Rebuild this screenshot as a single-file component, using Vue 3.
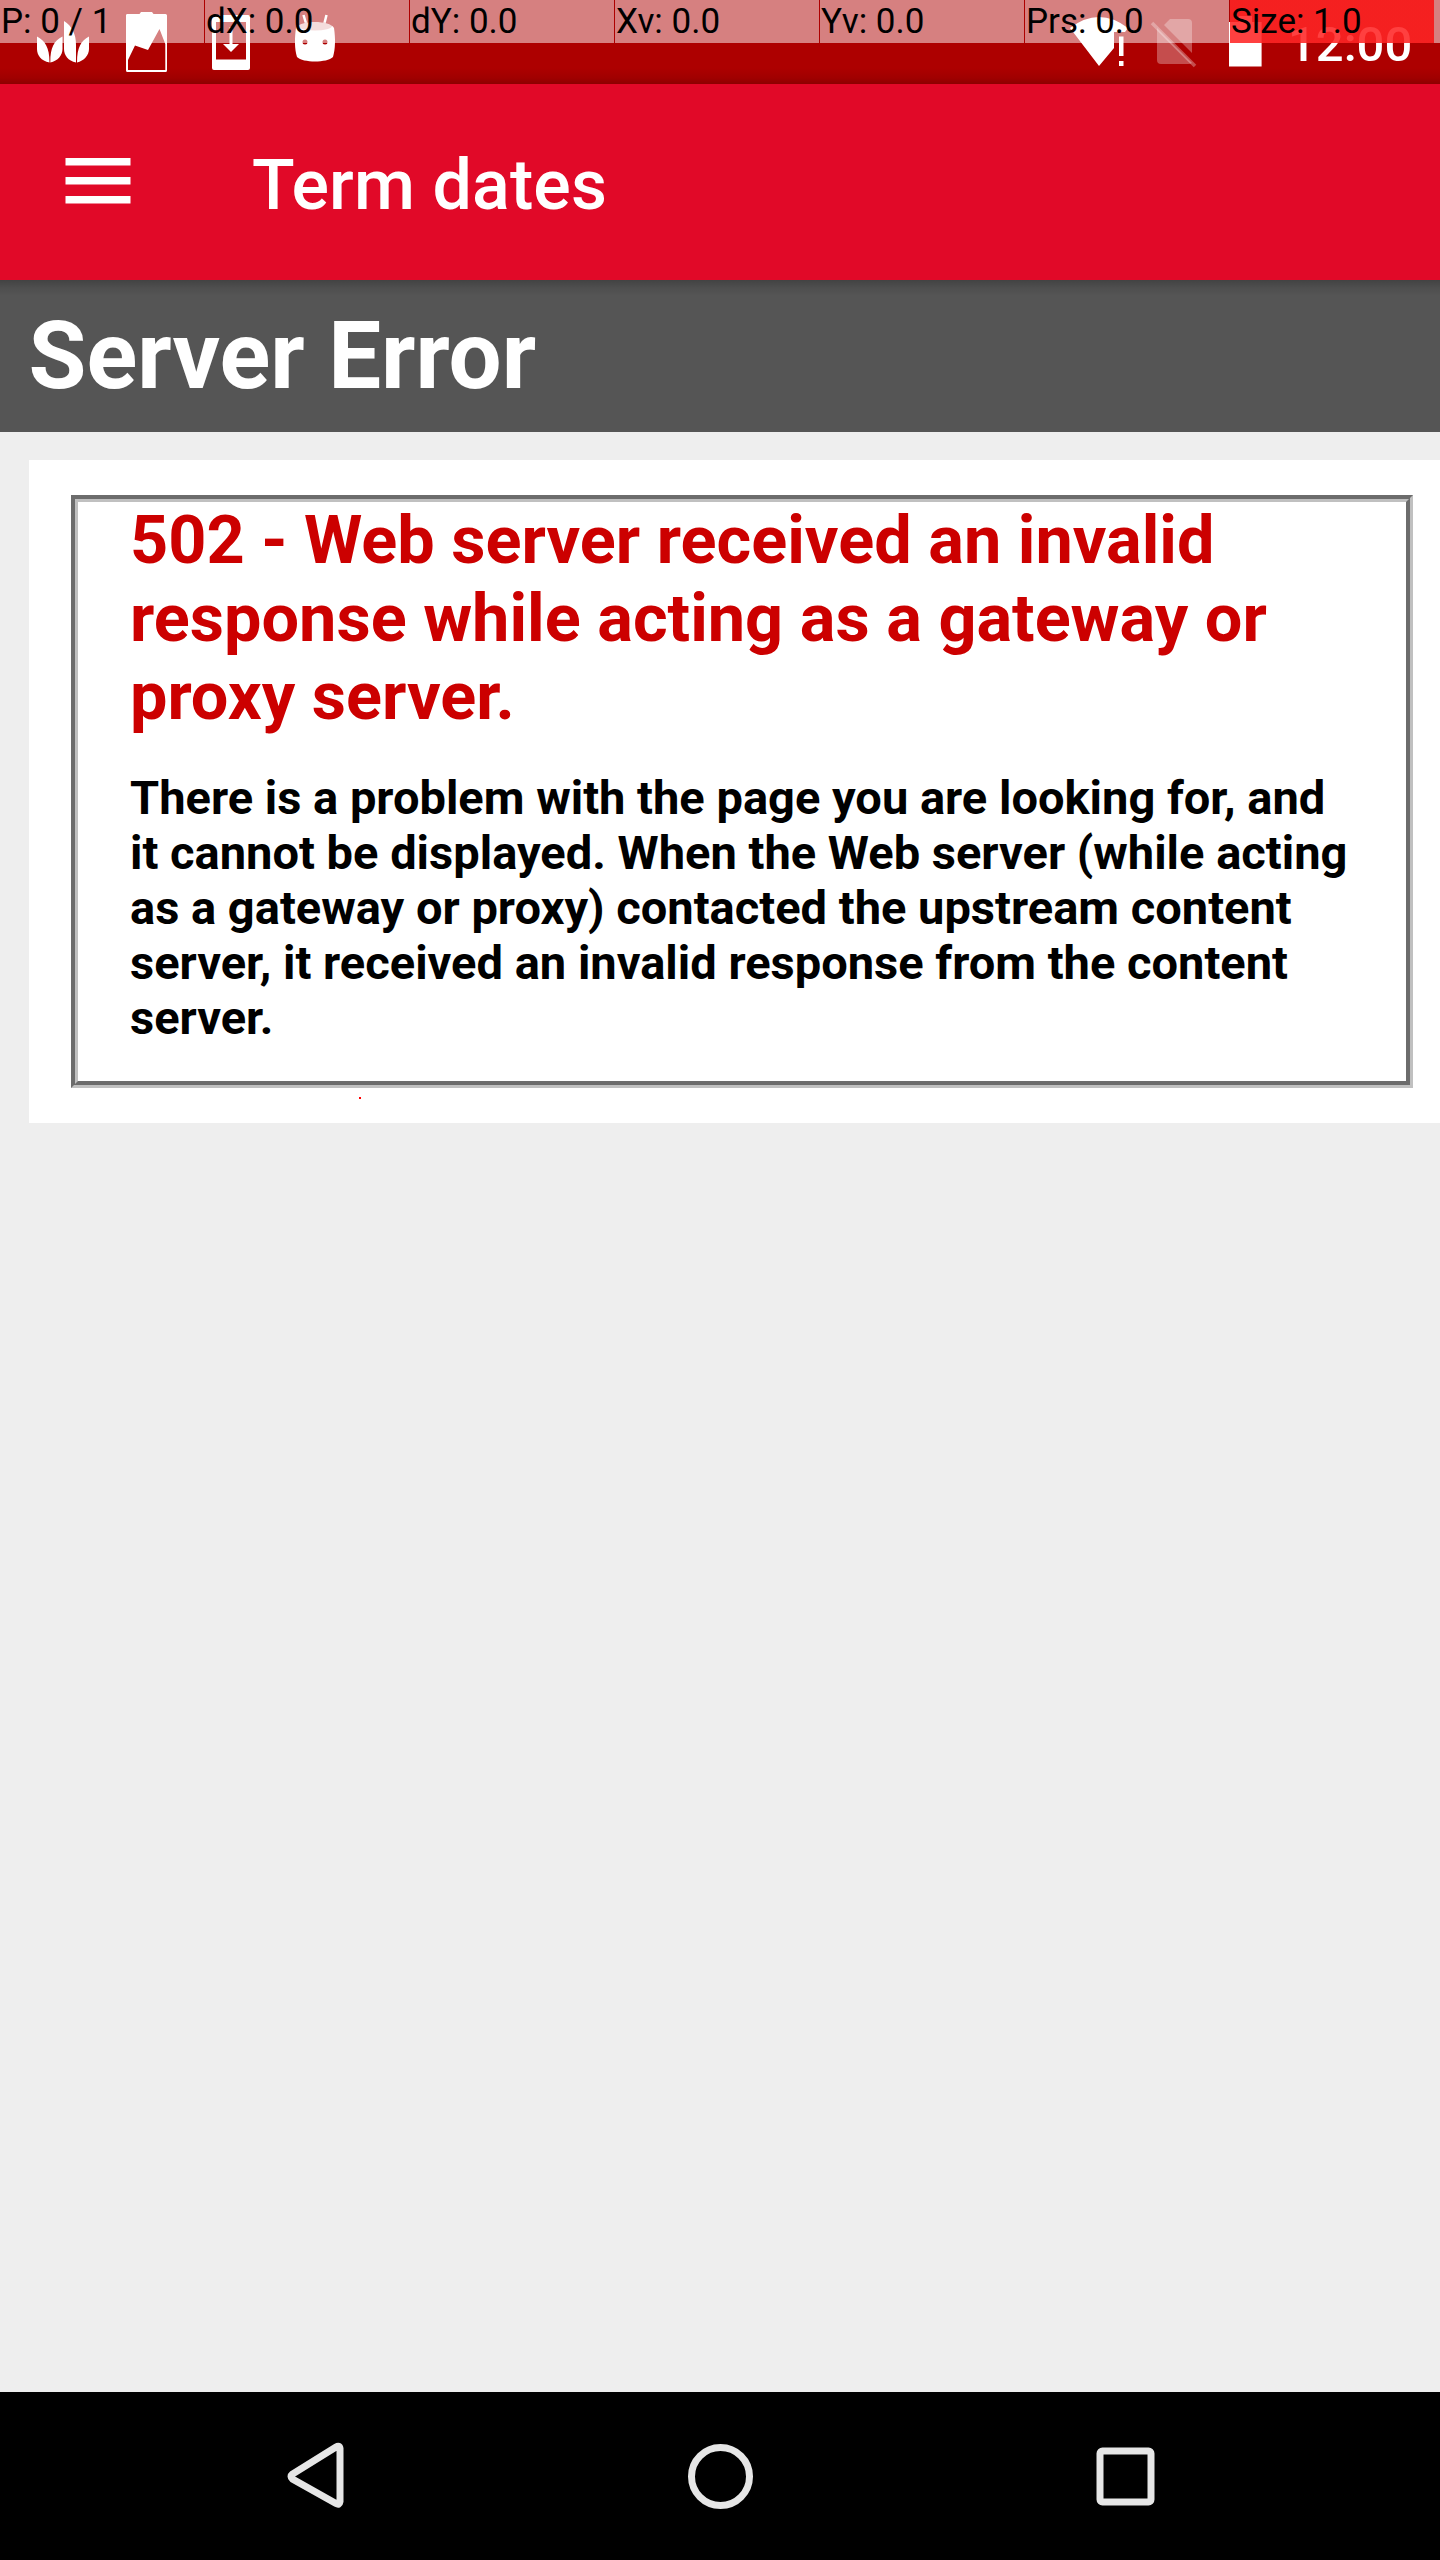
<script setup>
const pointerCells = ['P: 0 / 1', 'dX: 0.0', 'dY: 0.0', 'Xv: 0.0', 'Yv: 0.0', 'Prs: 0.0', 'Size: 1.0']
</script>

<template>
  <div class="screen">
    <div class="status-bar">
      <svg class="notifications" width="360" height="84" viewBox="0 0 360 84" fill="#fff">
        <path d="M37 36.500C45 41 49.500 47 49.500 62.500C41 61 37 55 37 49ZM62.500 36.500C54 41 50.300 47 50.300 62.500C58 61 62.500 55 62.500 49ZM64 21C72 26 76 34 76 45V62.500C68 61 64 55 64 49ZM89 36.500C81 41 77 47 77 62.500C84 61 89 55 89 49Z" />
        <path fill-rule="evenodd" d="M127 14H139.500L141 12H152L153.500 14H165.500Q167 14 167 15.500V70.500Q167 72 165.500 72H127.500Q126 72 126 70.500V15.500Q126 14 127 14ZM128 60L135 45.500L148 50L159.500 29L165.300 44V70H128Z" />
        <path fill-rule="evenodd" d="M214 15H248Q250 15 250 17V68Q250 70 248 70H214Q212 70 212 68V17Q212 15 214 15ZM216 22V59.500H246V22ZM229.500 27H232.500V44H239L231 52L223 44H229.500Z" />
        <path fill-rule="evenodd" d="M296 28C300 20 330 20 334 28C335.500 38 335.500 49 333 57C327 63 303 63 297 57C294.500 49 294.500 38 296 28ZM302.500 42A2.500 2.500 0 1 0 307.500 42A2.500 2.500 0 1 0 302.500 42ZM322.500 42A2.500 2.500 0 1 0 327.500 42A2.500 2.500 0 1 0 322.500 42Z" />
        <path d="M303.500 15L306.500 25M326.500 15L324 25" stroke="#fff" stroke-width="2.500" />
        <ellipse cx="315" cy="26" rx="17" ry="4.500" fill="#ad0000" fill-opacity=".28" />
      </svg>
      <div class="system">
        <svg width="200" height="84" viewBox="1064 0 200 84" fill="#fff">
          <path d="M1070 28Q1099 6 1128 28L1125 32H1114V48L1099 66ZM1119 36.500H1123.500V56H1119ZM1119 61H1123.500V66H1119Z" />
          <path fill-opacity=".3" d="M1164 25L1170 19H1188Q1192 19 1192 23V53ZM1157 28L1192 63Q1191 64 1188 64H1161Q1157 64 1157 60Z" />
          <path d="M1152 23L1195 66" stroke="#fff" stroke-opacity=".3" stroke-width="3.500" />
          <path d="M1229 22H1239V16H1252V22H1261.600V66.500H1229Z" />
        </svg>
        <span class="clock">12:00</span>
      </div>
      <div class="pointer-bar">
        <div v-for="label in pointerCells" :key="label" class="cell" :class="{ hot: label.startsWith('Size') }">{{ label }}</div>
        <div class="rest"></div>
      </div>
    </div>

    <header class="app-bar">
      <svg width="66" height="48" viewBox="0 0 66 48" fill="#fff">
        <path d="M.5 1H65.500V8.500H.5ZM.5 20H65.500V27.500H.5ZM.5 39H65.500V46.500H.5Z" />
      </svg>
      <span class="app-title">Term dates</span>
    </header>

    <main>
      <div class="banner"><h1>Server Error</h1></div>
      <section class="card">
        <div class="fieldset">
          <h2>502 - Web server received an invalid<br />response while acting as a gateway or<br />proxy server.</h2>
          <h3>There is a problem with the page you are looking for, and<br />it cannot be displayed. When the Web server (while acting<br />as a gateway or proxy) contacted the upstream content<br />server, it received an invalid response from the content<br />server.</h3>
        </div>
        <i class="touch-dot"></i>
      </section>
    </main>

    <nav class="nav-bar">
      <svg width="1440" height="168" viewBox="0 0 1440 168" fill="none" stroke="#e6e6e6" stroke-width="7">
        <path d="M340 56.500V109.500Q339.500 113.500 336 111.500L292.500 87Q289.500 84.500 292.500 82L336 55Q339.500 53 340 56.500Z" />
        <circle cx="720.500" cy="84.500" r="29" />
        <rect x="1100" y="59" width="51" height="51" rx="2.500" />
      </svg>
    </nav>
  </div>
</template>

<style>
body {
  margin: 0;
}
</style>

<style scoped>
.screen {
  width: 1440px;
  height: 2560px;
  display: flex;
  flex-direction: column;
  overflow: hidden;
  background: #eee;
  font-family: Roboto, sans-serif;
}
.status-bar {
  position: relative;
  flex: none;
  height: 84px;
  display: flex;
  justify-content: space-between;
  background: linear-gradient(#ad0000 68px, #a00000 78px, #8c0000 84px);
}
.system {
  display: flex;
  width: 376px;
}
.system svg {
  flex: none;
}
.clock {
  margin-left: 24px;
  padding-top: 16px;
  font-size: 49px;
  line-height: 57px;
  font-weight: 500;
  color: #fff;
}
.pointer-bar {
  position: absolute;
  inset: 0 0 auto;
  height: 43px;
  display: flex;
  gap: 1px;
}
.cell {
  box-sizing: border-box;
  flex: none;
  width: 204px;
  padding-left: 1px;
  background: rgba(255, 255, 255, 0.5);
  font-size: 35px;
  line-height: 43px;
  color: #000;
  white-space: nowrap;
}
.cell.hot {
  background: linear-gradient(rgba(255, 0, 0, 0.75), rgba(255, 0, 0, 0.75)), rgba(255, 255, 255, 0.5);
}
.rest {
  flex: 1;
  margin-left: -1px;
  background: rgba(255, 255, 255, 0.5);
}
.app-bar {
  position: relative;
  z-index: 1;
  flex: none;
  height: 196px;
  box-sizing: border-box;
  padding-left: 65px;
  display: flex;
  align-items: center;
  background: #e10928;
}
.app-bar::after {
  content: '';
  position: absolute;
  inset: 100% 0 auto;
  height: 16px;
  background: linear-gradient(rgba(0, 0, 0, 0.22), rgba(0, 0, 0, 0.08) 50%, transparent);
}
.app-bar svg {
  margin-bottom: 3px;
}
.app-title {
  margin-left: 121px;
  padding-top: 6px;
  font-size: 70px;
  line-height: 82px;
  font-weight: 500;
  letter-spacing: 0.1px;
  color: #fff;
}
main {
  flex: 1;
}
h1,
h2,
h3 {
  margin: 0;
  font-weight: 700;
  white-space: nowrap;
}
.banner {
  height: 152px;
  box-sizing: border-box;
  padding: 21px 28.5px;
  background: #555;
}
h1 {
  font-size: 94.08px;
  line-height: 110px;
  color: #fff;
}
.card {
  position: relative;
  box-sizing: border-box;
  height: 663px;
  margin: 28px 0 0 29px;
  padding: 35px 27px 35px 42px;
  background: #fff;
}
.fieldset {
  box-sizing: border-box;
  height: 593px;
  border: 7px groove #c0c0c0;
  padding: 0 52px;
}
h2 {
  margin-top: -1px;
  font-size: 66.64px;
  line-height: 78px;
  color: #c00;
}
h3 {
  margin-top: 35px;
  font-size: 47.04px;
  line-height: 55px;
  color: #000;
}
.touch-dot {
  position: absolute;
  left: 330px;
  top: 637px;
  width: 2px;
  height: 2px;
  background: #f00;
}
.nav-bar {
  flex: none;
  height: 168px;
  background: #000;
}
.nav-bar svg {
  display: block;
}
</style>
